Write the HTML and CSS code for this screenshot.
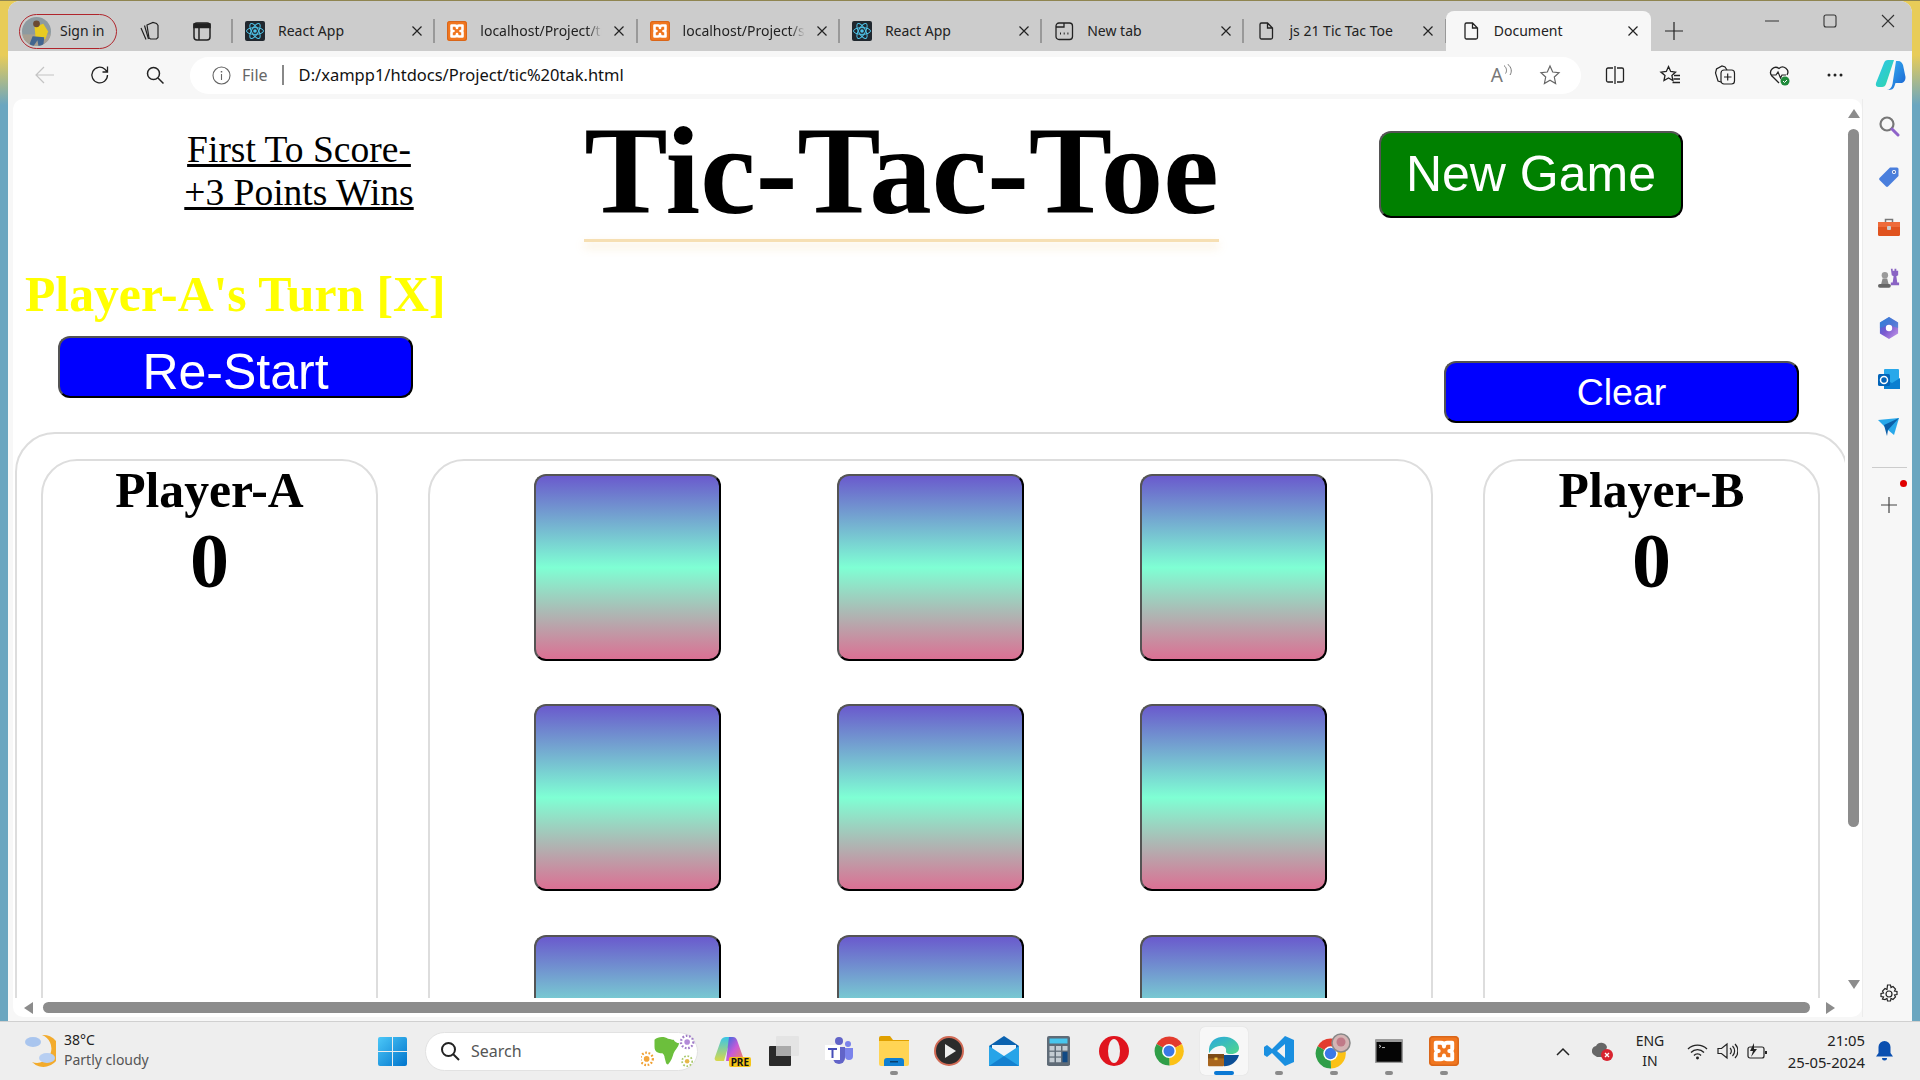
FILE: index.html
```html
<!DOCTYPE html>
<html lang="en">
<head>
  <meta charset="UTF-8" />
  <title>Document</title>
  <link rel="stylesheet" href="styles.css">
</head>
<body>

  <!-- Shared icons -->
  <svg class="defs" width="0" height="0">
    <symbol id="react" viewBox="0 0 20 20">
      <rect width="20" height="20" rx="2" fill="#20272e"/>
      <g fill="none" stroke="#4fc3e8" stroke-width="1">
        <ellipse cx="10" cy="10" rx="8.5" ry="3.4"/>
        <ellipse cx="10" cy="10" rx="8.5" ry="3.4" transform="rotate(60 10 10)"/>
        <ellipse cx="10" cy="10" rx="8.5" ry="3.4" transform="rotate(120 10 10)"/>
      </g>
      <circle cx="10" cy="10" r="1.8" fill="#4fc3e8"/>
    </symbol>
    <symbol id="xampp" viewBox="0 0 20 20">
      <rect width="20" height="20" rx="2.5" fill="#f0761f"/>
      <rect x=".5" y=".5" width="19" height="19" rx="2.5" fill="none" stroke="#d9661a"/>
      <path d="M4.500 4.500h3.500c1.500 0 2 1 2 2.500 0-1.500.5-2.500 2-2.500h3.500v4c0 .9-1 1.500-2 1.500 1 0 2 .6 2 1.500v4H12c-1.500 0-2-1-2-2.500 0 1.500-.5 2.500-2 2.500H4.500v-4c0-.9 1-1.500 2-1.500-1 0-2-.6-2-1.500z" fill="none" stroke="#fff" stroke-width="2.600" stroke-linejoin="round"/>
    </symbol>
    <symbol id="page" viewBox="0 0 20 20">
      <path d="M4 3.500a1.500 1.500 0 0 1 1.500-1.500h6l5 5v9.500a1.500 1.500 0 0 1-1.500 1.500h-9.500a1.500 1.500 0 0 1-1.500-1.500zM11.500 2v5h5" fill="none" stroke="#222" stroke-width="1.300"/>
    </symbol>
    <symbol id="close" viewBox="0 0 12 12">
      <path d="M1.500 1.500l9 9M10.500 1.500l-9 9" stroke="#222" stroke-width="1.200" fill="none"/>
    </symbol>
    <symbol id="chrome" viewBox="0 0 30 30">
      <path d="M15 15L2.500 8A14.500 14.500 0 0 1 28 8z" fill="#e33b2e"/>
      <path d="M15 15L28 8A14.500 14.500 0 0 1 15.500 29.500z" fill="#fbc116"/>
      <path d="M15 15L15.500 29.500A14.500 14.500 0 0 1 2.500 8z" fill="#2f9e48"/>
      <circle cx="15" cy="15" r="7" fill="#fff"/>
      <circle cx="15" cy="15" r="5.500" fill="#3b78e7"/>
    </symbol>
  </svg>

  <div class="window">

    <!-- Tab strip -->
    <div class="tabbar">
      <div class="profile">
        <svg class="avatar" viewBox="0 0 30 30">
          <clipPath id="avatarClip"><circle cx="15" cy="15" r="15"/></clipPath>
          <g clip-path="url(#avatarClip)">
            <rect width="30" height="30" fill="#8d9aa0"/>
            <rect y="18" width="30" height="12" fill="#a79f92"/>
            <path d="M13 10l9-3 5 8-3 8-10-2z" fill="#e8cb22"/>
            <circle cx="15" cy="7" r="3.500" fill="#6b4a33"/>
            <path d="M11 20l12 1-1 9h-5l-1-6-4 6H7z" fill="#42658f"/>
          </g>
        </svg>
        <span>Sign in</span>
      </div>
      <div class="tab-tool tab-tool-first">
        <svg width="22" height="22" viewBox="0 0 22 22" fill="none" stroke="#222" stroke-width="1.200"><path d="M9 5l6-2.500 3.500 1 1.500 2v12l-1.500 1.500h-6l-1.500-1z"/><path d="M6.500 5.500l4 13.500M3 8l5 11.500"/></svg>
      </div>
      <div class="tab-tool">
        <svg width="22" height="22" viewBox="0 0 22 22" fill="none" stroke="#222" stroke-width="1.500"><rect x="3" y="3" width="16" height="17" rx="3"/><path d="M3 4h16v3.500H3z" fill="#222"/><path d="M8 7v13"/></svg>
      </div>
      <div class="tab-sep"></div>

      <div class="tab">
        <svg class="tab-icon"><use href="#react"/></svg>
        <span class="tab-label">React App</span>
        <svg class="tab-close"><use href="#close"/></svg>
      </div>
      <div class="tab">
        <svg class="tab-icon"><use href="#xampp"/></svg>
        <span class="tab-label fade">localhost/Project/tic</span>
        <svg class="tab-close"><use href="#close"/></svg>
      </div>
      <div class="tab">
        <svg class="tab-icon"><use href="#xampp"/></svg>
        <span class="tab-label fade">localhost/Project/sc</span>
        <svg class="tab-close"><use href="#close"/></svg>
      </div>
      <div class="tab">
        <svg class="tab-icon"><use href="#react"/></svg>
        <span class="tab-label">React App</span>
        <svg class="tab-close"><use href="#close"/></svg>
      </div>
      <div class="tab">
        <svg class="tab-icon" viewBox="0 0 20 20" fill="none" stroke="#222" stroke-width="1.300">
          <rect x="2" y="2" width="16.500" height="16.500" rx="3"/>
          <path d="M2 6h8V2"/>
          <path d="M6 12.500h1M9.700 12.500h1M13.400 12.500h1" stroke-width="1.800"/>
        </svg>
        <span class="tab-label">New tab</span>
        <svg class="tab-close"><use href="#close"/></svg>
      </div>
      <div class="tab">
        <svg class="tab-icon"><use href="#page"/></svg>
        <span class="tab-label">js 21 Tic Tac Toe</span>
        <svg class="tab-close"><use href="#close"/></svg>
      </div>
      <div class="tab active">
        <svg class="tab-icon"><use href="#page"/></svg>
        <span class="tab-label">Document</span>
        <svg class="tab-close"><use href="#close"/></svg>
      </div>

      <div class="new-tab">
        <svg width="18" height="18" viewBox="0 0 18 18" stroke="#222" stroke-width="1.200"><path d="M9 0v18M0 9h18"/></svg>
      </div>

      <div class="win-controls">
        <svg width="14" height="14" viewBox="0 0 14 14" stroke="#333" stroke-width="1.100"><path d="M0 7h14"/></svg>
        <svg width="14" height="14" viewBox="0 0 14 14" fill="none" stroke="#333" stroke-width="1.100"><rect x="1" y="1" width="12" height="12" rx="2"/></svg>
        <svg width="14" height="14" viewBox="0 0 14 14" stroke="#333" stroke-width="1.100"><path d="M1 1l12 12M13 1L1 13"/></svg>
      </div>
    </div>

    <!-- Address bar row -->
    <div class="toolbar">
      <div class="tool">
        <svg width="20" height="18" viewBox="0 0 20 18" fill="none" stroke="#c4c4c4" stroke-width="1.200"><path d="M19 9H1M9 1L1 9l8 8"/></svg>
      </div>
      <div class="tool">
        <svg width="22" height="22" viewBox="0 0 22 22" fill="none" stroke="#222" stroke-width="1.300"><path d="M18.500 11a7.800 7.800 0 1 1-2.600-5.800L18.500 8M18.500 2.500V8h-5"/></svg>
      </div>
      <div class="tool">
        <svg width="20" height="20" viewBox="0 0 20 20" fill="none" stroke="#222" stroke-width="1.500"><circle cx="8.500" cy="8.500" r="6"/><path d="M13 13l5.500 5.500"/></svg>
      </div>
      <div class="address">
        <svg class="info" width="19" height="19" viewBox="0 0 19 19" fill="none" stroke="#666" stroke-width="1.100"><circle cx="9.500" cy="9.500" r="8.500"/><path d="M9.500 8v6"/><path d="M9.500 5v1.400" stroke-width="1.500"/></svg>
        <span class="scheme">File</span>
        <span class="address-sep"></span>
        <span class="url">D:/xampp1/htdocs/Project/tic%20tak.html</span>
        <span class="read-aloud">A<svg width="10" height="14" viewBox="0 0 10 14" fill="none" stroke="#777" stroke-width="1"><path d="M1 1.500c3 2.500 3 6 1.500 8M4.500 0c4.500 3.500 4.500 8 2.500 11"/></svg></span>
        <svg class="addr-star" width="22" height="22" viewBox="0 0 22 22" fill="none" stroke="#666" stroke-width="1.200"><path d="M11 2l2.700 6 6.300.7-4.700 4.300 1.300 6.500L11 16.200l-5.600 3.300 1.300-6.500L2 8.700 8.300 8z"/></svg>
      </div>
      <div class="tool-group">
        <div class="tool">
          <svg width="20" height="20" viewBox="0 0 20 20" fill="none" stroke="#222" stroke-width="1.300"><path d="M8 3H3a1.500 1.500 0 0 0-1.500 1.500v11A1.500 1.500 0 0 0 3 17h5M12 3h5a1.500 1.500 0 0 1 1.500 1.500v11A1.500 1.500 0 0 1 17 17h-5M10 1v18"/></svg>
        </div>
        <div class="tool">
          <svg width="22" height="22" viewBox="0 0 22 22" fill="none" stroke="#222" stroke-width="1.300"><path d="M9.500 2.500l2.200 5 4.800.6-3.600 3.300 1 5.100-4.400-2.600L5 16.500l1-5.100-4-3.300 5.300-.6z"/><path d="M15 11.500h6M14.500 15h6.500M13.500 18.500H21"/></svg>
        </div>
        <div class="tool">
          <svg width="22" height="22" viewBox="0 0 22 22" fill="none" stroke="#222" stroke-width="1.200"><path d="M7 18l-3-1-2.500-8 1-4L8 2l3 1 2 3"/><rect x="7" y="6" width="13.500" height="14" rx="3"/><path d="M13.700 9.500v7M10 13h7.500"/></svg>
        </div>
        <div class="tool">
          <svg width="24" height="24" viewBox="0 0 24 24" fill="none"><path d="M11 20L3.500 12.500A5.200 5.200 0 0 1 11 5.500a5.200 5.200 0 0 1 8 6.500" stroke="#222" stroke-width="1.300"/><path d="M3 12h5l2-3 2.500 6 1.500-3h4" stroke="#222" stroke-width="1.200"/><circle cx="17" cy="18" r="4.500" fill="#1f8a3b"/><path d="M15 18l1.500 1.500 2.500-2.500" stroke="#fff" stroke-width="1"/></svg>
        </div>
        <div class="tool">
          <svg width="16" height="4" viewBox="0 0 16 4" fill="#222"><circle cx="2" cy="2" r="1.500"/><circle cx="8" cy="2" r="1.500"/><circle cx="14" cy="2" r="1.500"/></svg>
        </div>
        <div class="tool">
          <svg width="31" height="32" viewBox="0 0 31 32">
            <defs>
              <linearGradient id="copA" x1="0" y1="0" x2="1" y2="1"><stop offset="0" stop-color="#2ec4f0"/><stop offset="1" stop-color="#2fd8a3"/></linearGradient>
              <linearGradient id="copB" x1="0" y1="0" x2="1" y2="1"><stop offset="0" stop-color="#35b8f5"/><stop offset="1" stop-color="#1a5fd0"/></linearGradient>
            </defs>
            <path d="M9 4Q10 1 13 1H19L11 25Q10 28 7 28H4Q0 28 1 24z" fill="url(#copA)"/>
            <path d="M21 2h2c3 0 4 2 5 4l2.500 12c0 4-2 6-5 6h-5l-1 3c-1 3-3 4-6 4h-2c3 0 5-2 6-6z" fill="url(#copB)"/>
          </svg>
        </div>
      </div>
    </div>

    <div class="browser-body">

      <div class="page">
        <div class="viewport">

          <!-- The game page itself -->
          <div class="top">
            <div class="top-left">
              <p class="first-to">First To Score-<br>+3 Points Wins</p>
              <p class="turn">Player-A's Turn [X]</p>
              <button class="btn btn-restart">Re-Start</button>
            </div>
            <h1 class="title">Tic-Tac-Toe</h1>
            <div class="top-right">
              <button class="btn btn-new">New Game</button>
              <button class="btn btn-clear">Clear</button>
            </div>
          </div>

          <div class="main">
            <div class="panel player">
              <h2>Player-A</h2>
              <div class="score">0</div>
            </div>
            <div class="panel board">
              <div class="cell"></div>
              <div class="cell"></div>
              <div class="cell"></div>
              <div class="cell"></div>
              <div class="cell"></div>
              <div class="cell"></div>
              <div class="cell"></div>
              <div class="cell"></div>
              <div class="cell"></div>
            </div>
            <div class="panel player">
              <h2>Player-B</h2>
              <div class="score">0</div>
            </div>
          </div>

        </div>

        <!-- Vertical scrollbar -->
        <div class="vscroll">
          <span class="arrow arrow-up"></span>
          <span class="vthumb"></span>
          <span class="arrow arrow-down"></span>
        </div>

        <!-- Horizontal scrollbar -->
        <div class="hscroll">
          <span class="arrow arrow-left"></span>
          <span class="hthumb"></span>
          <span class="arrow arrow-right"></span>
        </div>
      </div>

      <!-- Edge sidebar -->
      <div class="sidebar">
        <svg width="22" height="22" viewBox="0 0 22 22" fill="none"><circle cx="9" cy="9" r="6.500" stroke="#777" stroke-width="2.200"/><path d="M14 14l6 6" stroke="#8e63c9" stroke-width="3" stroke-linecap="round"/></svg>
        <svg width="22" height="22" viewBox="0 0 22 22"><path d="M12 1.500h7a1.500 1.500 0 0 1 1.500 1.500v7L10 20.500a1.500 1.500 0 0 1-2 0L1.500 14a1.500 1.500 0 0 1 0-2z" fill="#4a7fdd"/><circle cx="16" cy="6" r="2" fill="#fff"/><circle cx="16" cy="6" r="1" fill="#2a4fa0"/></svg>
        <svg width="22" height="22" viewBox="0 0 22 22"><path d="M7.500 6V3.500h7V6" fill="none" stroke="#777" stroke-width="1.500"/><rect y="6" width="22" height="14" rx="1.500" fill="#e0531f"/><rect y="6" width="22" height="5" fill="#ee6b3a"/><rect x="9" y="10" width="4" height="4" rx="1" fill="#ccc"/></svg>
        <svg width="24" height="22" viewBox="0 0 24 24"><path d="M16 2h2v2h2V2h2v2h2v5l-2 1 1 7h2v3h-9v-3h2l1-7-2-1z" fill="#8a63c4" transform="translate(-2 0)"/><circle cx="7.500" cy="9" r="3.500" fill="#9a9a9a"/><path d="M5 12.500h5l1.500 6h-8z" fill="#8a8a8a"/><rect y="18.500" width="14" height="4" rx="2" fill="#666"/></svg>
        <svg width="20" height="22" viewBox="0 0 22 24"><defs><linearGradient id="m365" x1="0" y1="0" x2="1" y2="1"><stop offset="0" stop-color="#2f6bd8"/><stop offset=".5" stop-color="#7d5ad0"/><stop offset="1" stop-color="#c79ae8"/></linearGradient></defs><path d="M11 0l10 6v12l-10 6-10-6V6z" fill="url(#m365)"/><path d="M11 0l10 6v6l-6-2c-2-2-6-2-8 0l-6 2V6z" fill="#2b8fd8" opacity=".55"/><circle cx="11" cy="12" r="3.500" fill="#fff"/></svg>
        <svg width="22" height="22" viewBox="0 0 22 22"><rect x="6" y="1" width="15" height="19" rx="1" fill="#28a8ea"/><path d="M6 11l8 4 8-5v11H6z" fill="#0a7fd0"/><rect y="6" width="12" height="12" rx="1.500" fill="#0364b8"/><circle cx="6" cy="12" r="3.500" fill="none" stroke="#fff" stroke-width="1.500"/></svg>
        <svg width="22" height="20" viewBox="0 0 22 20"><path d="M0 2l21-2-5 17-6-5z" fill="#28a8ea"/><path d="M6 7l15-7-11 12-1 6z" fill="#0b5fa8"/></svg>
        <div class="side-sep"></div>
        <div class="side-plus">
          <span class="side-dot"></span>
          <svg width="16" height="16" viewBox="0 0 16 16" stroke="#444" stroke-width="1.200"><path d="M8 0v16M0 8h16"/></svg>
        </div>
        <svg class="side-gear" width="20" height="20" viewBox="0 0 20 20" fill="none" stroke="#222" stroke-width="1.200"><circle cx="10" cy="10" r="3"/><path d="M8.500 1h3l.5 2.500 2-1 2.500 2.500-1 2 2.500.5v3l-2.500.5 1 2-2.500 2.500-2-1-.5 2.500h-3l-.5-2.500-2 1L3.500 15l1-2L2 12.500v-3L4.500 9l-1-2L6 4.500l2 1z"/></svg>
      </div>
    </div>
  </div>

  <!-- Windows taskbar -->
  <div class="taskbar">
    <div class="weather">
      <svg width="31" height="33" viewBox="0 0 31 33">
        <path d="M17 1a16 16 0 1 1-10 27A14 14 0 0 0 17 1z" fill="#f3ab2c"/>
        <ellipse cx="8" cy="8" rx="8" ry="5" fill="#a9c5ee"/>
        <ellipse cx="22" cy="24" rx="8" ry="5" fill="#b8cff2"/>
      </svg>
      <div class="weather-text">
        <div class="temp">38°C</div>
        <div class="cond">Partly cloudy</div>
      </div>
    </div>

    <div class="start">
      <svg width="29" height="29" viewBox="0 0 29 29">
        <defs><linearGradient id="win" x1="0" y1="0" x2="1" y2="1"><stop offset="0" stop-color="#4cc8f8"/><stop offset="1" stop-color="#0074cc"/></linearGradient></defs>
        <path d="M0 2a2 2 0 0 1 2-2h12v14H0zM15 0h12a2 2 0 0 1 2 2v12H15zM0 15h14v14H2a2 2 0 0 1-2-2zM15 15h14v12a2 2 0 0 1-2 2H15z" fill="url(#win)"/>
      </svg>
    </div>

    <div class="search">
      <svg width="20" height="20" viewBox="0 0 20 20" fill="none" stroke="#222" stroke-width="2"><circle cx="8.500" cy="8.500" r="6.500"/><path d="M13 13l6 6"/></svg>
      <span>Search</span>
      <svg class="doodle" width="54" height="36" viewBox="0 0 48 32">
        <circle cx="5" cy="23" r="2.500" fill="#f3a53a"/>
        <circle cx="5" cy="23" r="5.500" fill="none" stroke="#f0a030" stroke-width="2" stroke-dasharray="1.500 1.500"/>
        <path d="M12 6c3-3 9-3 12-1 2 0 3 1 5 1 1 2 3 3 5 3-1 4-4 6-5 9-1 3-2 7-5 10-2 0-2-3-3-6 0-2-1-3-2-4-4 0-7-1-7-6z" fill="#6cbf3c"/>
        <circle cx="41" cy="8" r="2.500" fill="#b38bd8"/>
        <circle cx="41" cy="8" r="5.500" fill="none" stroke="#a07cc8" stroke-width="2" stroke-dasharray="1.500 1.500"/>
        <circle cx="41" cy="25" r="2" fill="#e6b84a"/>
        <circle cx="41" cy="25" r="4.500" fill="none" stroke="#a8c86a" stroke-width="1.500" stroke-dasharray="1.500 1.500"/>
      </svg>
    </div>

    <div class="apps">
      <div class="app">
        <svg width="30" height="30" viewBox="0 0 30 30">
          <defs><linearGradient id="cp1" x1="0" y1="0" x2="1" y2="1"><stop offset="0" stop-color="#2b6fe0"/><stop offset=".5" stop-color="#c85ad8"/><stop offset="1" stop-color="#f08a5a"/></linearGradient><linearGradient id="cp2" x1="0" y1="0" x2="0" y2="1"><stop offset="0" stop-color="#39c6e8"/><stop offset="1" stop-color="#d8d84a"/></linearGradient></defs>
          <path d="M7 4c1-2 3-3 5-3h5l-7 24H3c-2 0-3-2-2-4z" fill="url(#cp2)"/>
          <path d="M15 1h4c2 0 3 1 4 3l6 17c1 2-1 4-3 4H12z" fill="url(#cp1)"/>
        </svg>
        <span class="pre">PRE</span>
      </div>
      <div class="app">
        <svg width="30" height="30" viewBox="0 0 30 30"><rect x="7" y="0" width="23" height="20" rx="1" fill="#e4e4e4"/><rect y="10" width="22" height="20" rx="1" fill="#2a2a2a"/><rect x="7" y="10" width="15" height="10" fill="#aaa"/></svg>
      </div>
      <div class="app">
        <svg width="28" height="30" viewBox="0 0 28 30"><circle cx="14" cy="5" r="4" fill="#6264c8"/><circle cx="23" cy="8" r="3" fill="#7b83eb"/><path d="M8 11h12v11a6 6 0 0 1-12 0z" fill="#6264c8"/><path d="M20 12h8v8a4 4 0 0 1-8 0z" fill="#7b83eb"/><rect y="9" width="15" height="15" fill="#fff"/><path d="M3 12h9v2H8.500v8h-2v-8H3z" fill="#464eb8"/></svg>
      </div>
      <div class="app">
        <svg width="30" height="30" viewBox="0 0 30 30"><path d="M0 2a2 2 0 0 1 2-2h9l3 4h16v3H0z" fill="#e0a000"/><path d="M0 5h30v23a2 2 0 0 1-2 2H2a2 2 0 0 1-2-2z" fill="#ffd454"/><path d="M5 30v-5a3 3 0 0 1 3-3h14a3 3 0 0 1 3 3v5z" fill="#0f7fd2"/><rect x="11" y="25" width="8" height="1.500" fill="#063f70"/></svg>
        <span class="dot"></span>
      </div>
      <div class="app">
        <svg width="30" height="30" viewBox="0 0 30 30"><circle cx="15" cy="15" r="14" fill="#2c2c2c" stroke="#d06a55" stroke-width="2"/><path d="M11 8l11 7-11 7z" fill="#eee"/></svg>
      </div>
      <div class="app">
        <svg width="30" height="30" viewBox="0 0 30 30"><path d="M0 10L15 0l15 10v20H0z" fill="#0a62b0"/><path d="M3 9h24v7l-12 7-12-7z" fill="#eef4fa"/><path d="M0 10l15 10 15-10v20H0z" fill="#27a4e8"/><path d="M0 30l15-10 15 10z" fill="#1480cf"/></svg>
      </div>
      <div class="app">
        <svg width="23" height="30" viewBox="0 0 23 36" preserveAspectRatio="none"><rect width="23" height="36" rx="2" fill="#5f6b77"/><rect x="2.500" y="3" width="18" height="6" fill="#47c6ee"/><g fill="#c3ccd3"><rect x="2.500" y="12" width="5" height="5.500"/><rect x="9" y="12" width="5" height="5.500"/><rect x="15.500" y="12" width="5" height="5.500"/><rect x="2.500" y="19" width="5" height="5.500"/><rect x="9" y="19" width="5" height="5.500"/><rect x="2.500" y="26" width="5" height="5.500"/><rect x="9" y="26" width="5" height="5.500"/></g><rect x="15.500" y="19" width="5" height="12.500" fill="#124a84"/></svg>
      </div>
      <div class="app">
        <svg width="30" height="30" viewBox="0 0 30 30"><circle cx="15" cy="15" r="15" fill="#e0141e"/><ellipse cx="15" cy="15" rx="6" ry="12" fill="#eeeeee"/></svg>
      </div>
      <div class="app">
        <svg width="30" height="30"><use href="#chrome"/></svg>
      </div>
      <div class="app app-active">
        <svg width="31" height="31" viewBox="0 0 31 36" preserveAspectRatio="none">
          <defs><linearGradient id="edgeG" x1="0" y1="0" x2="1" y2="1"><stop offset="0" stop-color="#29a8e0"/><stop offset="1" stop-color="#52d88a"/></linearGradient></defs>
          <path d="M1 15C2 6 8 1 16 1c9 0 15 7 15 13 0 4-3 7-8 7-3 0-5-1-5-3 1-5-3-8-8-6-4 1-7 4-9 8z" fill="url(#edgeG)"/>
          <path d="M16 22h15c-2 8-8 13-15 13z" fill="#0c4f96"/>
          <rect y="21" width="16" height="14" rx="1" fill="#a8661f"/>
          <rect y="21" width="16" height="5" fill="#7d4a15"/>
          <rect x="6.500" y="25" width="3" height="3" fill="#f0c040"/>
        </svg>
        <span class="dot dot-blue"></span>
      </div>
      <div class="app">
        <svg width="30" height="30" viewBox="0 0 30 30"><path d="M21 0l9 4v22l-9 4L8 17l-5 4-3-2V11l3-2 5 4z" fill="#1a8fe0"/><path d="M21 8l-8 7 8 7z" fill="#f2f2f2"/></svg>
        <span class="dot"></span>
      </div>
      <div class="app">
        <svg width="38" height="36" viewBox="0 0 38 36"><svg y="5" width="31" height="31"><use href="#chrome"/></svg><circle cx="26" cy="10" r="9" fill="#d4b4b4" stroke="#888" stroke-width="1.500"/><circle cx="26" cy="9" r="4.500" fill="#c07a88"/></svg>
        <span class="dot"></span>
      </div>
      <div class="app">
        <svg width="28" height="24" viewBox="0 0 28 28" preserveAspectRatio="none"><rect width="28" height="28" rx="1" fill="#9a9a9a"/><rect x="1.500" y="3.500" width="25" height="23" fill="#050505"/><path d="M4 7l2 1.500L4 10M7 10h3" stroke="#ccc" stroke-width="1" fill="none"/></svg>
        <span class="dot"></span>
      </div>
      <div class="app">
        <svg width="30" height="30"><use href="#xampp"/></svg>
        <span class="dot"></span>
      </div>
    </div>

    <div class="tray">
      <div class="tray-item caret">
        <svg width="14" height="9" viewBox="0 0 14 9" fill="none" stroke="#222" stroke-width="1.500"><path d="M1 8l6-6 6 6"/></svg>
      </div>
      <div class="tray-item drive">
        <svg width="22" height="20" viewBox="0 0 22 20"><path d="M2 14a5 5 0 0 1 2-9 6 6 0 0 1 11 1l-3 10H5z" fill="#666"/><circle cx="15" cy="14" r="6" fill="#d8232f"/><path d="M13 12l4 4M17 12l-4 4" stroke="#fff" stroke-width="1.300"/></svg>
      </div>
      <div class="lang">ENG<br>IN</div>
      <div class="tray-item">
        <svg width="21" height="17" viewBox="0 0 21 17" fill="none" stroke="#222" stroke-width="1.300"><path d="M1 6a13.500 13.500 0 0 1 19 0M4 9.500a9 9 0 0 1 13 0M7 12.500a4.500 4.500 0 0 1 7 0"/><circle cx="10.500" cy="15" r=".8" fill="#222"/></svg>
      </div>
      <div class="tray-item">
        <svg width="21" height="18" viewBox="0 0 21 18" fill="none" stroke="#222" stroke-width="1.200"><path d="M1 6.500h3.500L10 2v14l-5.500-4.500H1zM13 6a4 4 0 0 1 0 6M15.500 4a7 7 0 0 1 0 10M18 2a10 10 0 0 1 0 14"/></svg>
      </div>
      <div class="tray-item">
        <svg width="21" height="19" viewBox="0 0 21 19" fill="none" stroke="#222" stroke-width="1.200"><rect x="1" y="5" width="16" height="11" rx="2"/><path d="M19 9v3" stroke-width="2"/><path d="M7 1L3 9h3l-2 6 6-8H7z" fill="#222" stroke="none"/></svg>
      </div>
      <div class="clock">21:05<br>25-05-2024</div>
      <div class="tray-item bell">
        <svg width="17" height="21" viewBox="0 0 17 21"><path d="M8.500 0a6 6 0 0 1 6 6v6l2.500 3.500H0L2.500 12V6a6 6 0 0 1 6-6z" fill="#0a4fb0"/><path d="M6 17h5a2.500 2.500 0 0 1-5 0z" fill="#0a4fb0"/></svg>
      </div>
    </div>
  </div>

</body>
</html>
```

FILE: styles.css
```css
/* Desktop behind the browser window */
html, body {
  margin: 0;
  height: 100%;
}

body {
  width: 1920px;
  height: 1080px;
  padding-top: 1px;
  box-sizing: border-box;
  overflow: hidden;
  display: flex;
  flex-direction: column;
  font-family: "Noto Sans", sans-serif;
  background: linear-gradient(#8f8550 0, #8f8550 1px, #e8cc58 1px, #e8cc58 55px, #6ba6c0 105px, #6ba6c0 100%);
}

.defs {
  position: absolute;
}

.window {
  flex: 1;
  min-height: 0;
  margin: 0 8px;
  display: flex;
  flex-direction: column;
  border-radius: 12px 12px 0 0;
  overflow: hidden;
  background: #f7f7f7;
}

/* Tab strip */
.tabbar {
  height: 50px;
  flex: none;
  display: flex;
  align-items: flex-end;
  background: #cccccc;
  font-size: 14px;
  color: #222;
}

.profile {
  box-sizing: border-box;
  width: 98px;
  height: 35px;
  margin: 0 0 2px 11px;
  padding-left: 2px;
  display: flex;
  align-items: center;
  gap: 9px;
  border: 1.5px solid #b0252c;
  border-radius: 18px;
}

.profile span {
  padding-bottom: 2px;
}

.avatar {
  width: 29px;
  height: 29px;
}

.tab-tool {
  width: 53px;
  height: 40px;
  display: flex;
  align-items: center;
  justify-content: center;
}

.tab-tool-first {
  margin-left: 5px;
}

.tab-sep {
  width: 2px;
  height: 24px;
  margin: 0 0 8px 3px;
  background: #999;
}

.tab {
  box-sizing: border-box;
  width: 202.300px;
  height: 40px;
  padding-left: 12px;
  display: flex;
  align-items: center;
  position: relative;
}

.tab::after {
  content: "";
  position: absolute;
  right: 0;
  top: 8px;
  width: 2px;
  height: 24px;
  background: #999;
}

.tab.active {
  width: 205px;
  padding-left: 15px;
  margin-left: -1px;
  background: #f7f7f7;
  border-radius: 8px 8px 0 0;
}

.tab.active::after {
  display: none;
}

.tab-icon {
  width: 20px;
  height: 20px;
  flex: none;
}

.tab-label {
  width: 122px;
  margin-left: 13px;
  padding-bottom: 2px;
  white-space: nowrap;
  overflow: hidden;
}

.tab-label.fade {
  -webkit-mask-image: linear-gradient(to right, #000 88%, transparent);
  mask-image: linear-gradient(to right, #000 88%, transparent);
}

.tab-close {
  width: 12px;
  height: 12px;
  flex: none;
  margin-left: 11px;
}

.new-tab {
  height: 40px;
  margin-left: 14px;
  display: flex;
  align-items: center;
}

.win-controls {
  margin-left: auto;
  width: 147px;
  height: 40px;
  padding-right: 17px;
  align-self: flex-start;
  display: flex;
  align-items: center;
  justify-content: space-between;
  box-sizing: border-box;
}

/* Address bar row */
.toolbar {
  height: 48px;
  flex: none;
  display: flex;
  align-items: center;
  padding-left: 9px;
  background: #f7f7f7;
}

.tool {
  width: 55px;
  height: 40px;
  flex: none;
  display: flex;
  align-items: center;
  justify-content: center;
}

.address {
  box-sizing: border-box;
  flex: none;
  width: 1391px;
  height: 37px;
  margin-left: 8px;
  padding: 0 20px 0 22px;
  display: flex;
  align-items: center;
  background: #fff;
  border-radius: 19px;
  font-size: 16px;
}

.scheme {
  margin-left: 11px;
  padding-bottom: 1px;
  color: #666;
}

.address-sep {
  width: 2px;
  height: 20px;
  margin: 0 15px 0 14px;
  background: #888;
}

.url {
  padding-bottom: 2px;
  color: #111;
  font-size: 16.500px;
}

.read-aloud {
  margin-left: auto;
  display: flex;
  color: #777;
  font-size: 19px;
  line-height: 22px;
}

.addr-star {
  margin-left: 26px;
}

.tool-group {
  display: flex;
  flex: none;
  margin-left: 6.500px;
}

/* Page and sidebar */
.browser-body {
  flex: 1;
  min-height: 0;
  display: flex;
  padding-bottom: 4px;
}

.page {
  width: 1849px;
  margin-left: 5px;
  flex: none;
  display: grid;
  grid-template-columns: 1fr 17px;
  grid-template-rows: 1fr 19px;
  background: #fff;
  border-radius: 10px;
  overflow: hidden;
}

.viewport {
  overflow: hidden;
  min-height: 0;
  font-family: "Liberation Serif", serif;
}

/* Game header */
.top {
  height: 333px;
  display: grid;
  grid-template-columns: 571px 635px 1fr;
  align-items: start;
}

.first-to {
  margin: 29px 0 0;
  width: 572px;
  text-align: center;
  font-size: 37.500px;
  line-height: 43px;
  text-decoration: underline;
}

.turn {
  margin: 52px 0 12.500px 12px;
  color: #ffff00;
  font-size: 49.700px;
  font-weight: bold;
}

.btn {
  display: block;
  box-sizing: border-box;
  border: 2px outset #000;
  border-radius: 12px;
  color: #fff;
  font-family: "Liberation Sans", sans-serif;
}

.btn-restart,
.btn-clear {
  width: 355px;
  height: 62px;
  background: #0000ff;
}

.btn-restart {
  margin-left: 45px;
  padding: 5px 0 0;
  font-size: 50px;
}

.title {
  position: relative;
  margin: 0;
  padding-top: 4px;
  font-size: 125px;
  line-height: 136px;
  text-align: center;
  white-space: nowrap;
}

/* Wheat line under the title, with its soft glow */
.title::after {
  content: "";
  position: absolute;
  left: 0;
  right: 0;
  bottom: -3px;
  height: 3px;
  background: #f6dfb3;
  box-shadow: 0 5px 10px 0 rgba(245, 222, 179, 0.8);
}

.top-right {
  padding: 32px 0 0 160px;
}

.btn-new {
  width: 304px;
  height: 87px;
  padding-bottom: 3px;
  background: #008000;
  font-size: 50px;
}

.btn-clear {
  margin: 143px 0 0 65px;
  font-size: 37.500px;
}

/* Three panels */
.main {
  box-sizing: border-box;
  width: 1833px;
  height: 800px;
  margin-left: 2px;
  padding: 25px 0 0 24px;
  display: flex;
  gap: 50px;
  border: 2px solid #dddddd;
  border-radius: 40px;
}

.panel {
  box-sizing: border-box;
  height: 800px;
  border: 2px solid #dddddd;
  border-radius: 36px;
}

.player {
  width: 337px;
  padding-top: 1px;
  text-align: center;
}

.player h2 {
  margin: 0;
  font-size: 49.700px;
}

.score {
  margin-top: 1px;
  font-size: 78px;
  line-height: 82px;
  font-weight: bold;
}

.board {
  width: 1005px;
  padding: 13px 0 0 104px;
  display: grid;
  grid-template-columns: repeat(3, 187px);
  grid-auto-rows: 187px;
  column-gap: 116px;
  row-gap: 43.400px;
}

.cell {
  box-sizing: border-box;
  border: 2px outset #000;
  border-radius: 12px;
  background: linear-gradient(#6a5acd, #7fffd4 50%, #db7093);
}

/* Scrollbars */
.vscroll {
  grid-row: 1;
  grid-column: 2;
  display: flex;
  flex-direction: column;
  align-items: center;
  padding: 10px 0 9px;
  box-sizing: border-box;
}

.vthumb {
  width: 11px;
  height: 698px;
  margin-top: 11px;
  background: #8c8c8c;
  border-radius: 6px;
}

.hscroll {
  grid-row: 2;
  grid-column: 1;
  display: flex;
  align-items: center;
  padding: 0 0 0 11px;
}

.hthumb {
  width: 1767px;
  height: 11px;
  margin: 0 16px 0 10px;
  background: #8c8c8c;
  border-radius: 6px;
}

.arrow {
  width: 0;
  height: 0;
  flex: none;
  border-style: solid;
  border-color: transparent;
}

.arrow-up {
  border-width: 0 6.500px 9px;
  border-bottom-color: #8c8c8c;
}

.arrow-down {
  margin-top: auto;
  border-width: 9px 6.500px 0;
  border-top-color: #8c8c8c;
}

.arrow-left {
  border-width: 6.500px 9px 6.500px 0;
  border-right-color: #8c8c8c;
}

.arrow-right {
  border-width: 6.500px 0 6.500px 9px;
  border-left-color: #8c8c8c;
}

/* Edge sidebar */
.sidebar {
  flex: 1;
  display: flex;
  flex-direction: column;
  align-items: center;
  padding: 16px 0 0 3px;
  gap: 28.500px;
  border-left: 1px solid #ececec;
}

.side-sep {
  width: 35px;
  height: 1px;
  background: #ccc;
}

.side-plus {
  position: relative;
}

.side-dot {
  position: absolute;
  top: -16px;
  right: -10px;
  width: 7px;
  height: 7px;
  border-radius: 50%;
  background: #e00000;
}

.side-gear {
  margin-top: auto;
  margin-bottom: 13px;
}

/* Windows taskbar */
.taskbar {
  height: 59px;
  flex: none;
  display: flex;
  align-items: center;
  box-sizing: border-box;
  background: #eeeeee;
  border-top: 1px solid #d0d0d0;
  color: #222;
  font-size: 14px;
}

.weather {
  box-sizing: border-box;
  width: 365px;
  padding: 0 0 2px 25px;
  display: flex;
  align-items: center;
  gap: 8px;
}

.temp {
  line-height: 20px;
}

.cond {
  line-height: 20px;
  color: #555;
}

.start {
  width: 55px;
  display: flex;
  justify-content: center;
}

.search {
  box-sizing: border-box;
  width: 273px;
  height: 39px;
  margin-left: 5px;
  padding: 0 0 0 14px;
  display: flex;
  align-items: center;
  gap: 11px;
  background: #fff;
  border: 1px solid #e2e2e2;
  border-radius: 20px;
  font-size: 16px;
  color: #555;
}

.doodle {
  margin-left: auto;
  margin-right: 2px;
}

.apps {
  display: flex;
  margin-left: 3px;
}

.app {
  position: relative;
  width: 55px;
  height: 48px;
  display: flex;
  align-items: center;
  justify-content: center;
}

.app-active {
  width: 48px;
  margin: 0 3.500px;
  background: #f7f7f7;
  border-radius: 5px;
  box-shadow: 0 0 1px #ccc;
}

.pre {
  position: absolute;
  right: 5px;
  bottom: 8px;
  padding: 0 2px;
  background: #f5c518;
  border-radius: 2px;
  font-size: 10px;
  font-weight: bold;
  line-height: 10px;
  color: #111;
}

/* Little running-app markers */
.dot {
  position: absolute;
  left: 50%;
  bottom: 0;
  width: 8px;
  height: 4px;
  margin-left: -4px;
  background: #8a8a8a;
  border-radius: 2px;
}

.dot-blue {
  width: 20px;
  margin-left: -10px;
  background: #0a78d4;
}

.tray {
  display: flex;
  align-items: center;
  margin-left: 72px;
}

.tray-item {
  width: 30px;
  display: flex;
  justify-content: center;
}

.caret,
.drive {
  width: 40px;
}

.lang {
  width: 54px;
  margin-right: 5px;
  text-align: center;
  line-height: 20px;
}

.clock {
  width: 93px;
  text-align: right;
  line-height: 22px;
  font-size: 14.800px;
}

.bell {
  width: 26px;
  margin-left: 6px;
}
```
